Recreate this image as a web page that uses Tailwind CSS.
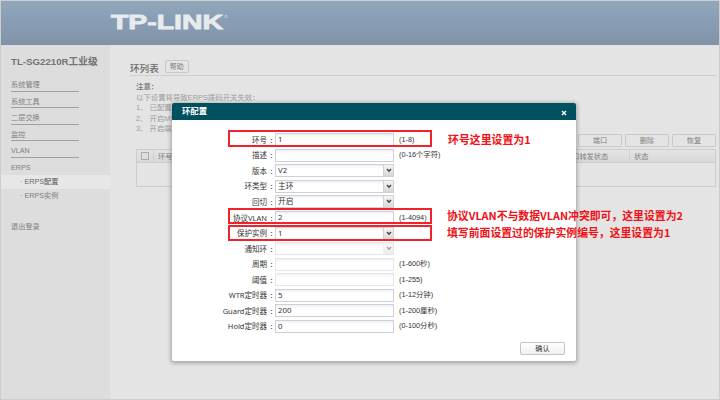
<!DOCTYPE html>
<html lang="zh-CN">
<head>
<meta charset="utf-8">
<title>环列表</title>
<script src="https://cdn.jsdelivr.net/npm/@tailwindcss/browser@4"></script>
</head>
<body class="relative h-[400px] w-[720px] overflow-hidden bg-[#e4e4e4] font-['Liberation_Sans','Noto_Sans_CJK_SC',sans-serif] text-[7.2px] text-[#808080]">
<div class="flex h-[400px] flex-col border border-[#cdcdcd] border-t-[#c3d1dc]">
  <header class="flex h-[44px] shrink-0 items-start border-b border-[#7f8fa5] bg-linear-to-b from-[#94a6b5] via-[#8ba2b9] via-25% to-[#8293a8] pt-[8px] pl-[109px]">
    <svg width="130" height="28" viewBox="0 0 130 28" fill="#e8ebed" stroke="#e8ebed">
      <text x="1" y="20" font-family="Liberation Sans" font-weight="700" font-size="20" textLength="112" lengthAdjust="spacingAndGlyphs" stroke-width=".8">TP-LINK</text>
      <circle cx="116" cy="7.5" r="1.2" fill="none" stroke-width=".5"/>
    </svg>
  </header>
  <div class="flex min-h-0 flex-1">
    <aside class="w-[109px] shrink-0 bg-[#dddddd]">
      <h1 class="mt-[9px] ml-[10px] h-[16px] text-[9.7px] leading-[16px] font-bold whitespace-nowrap text-[#747474]">TL-SG2210R工业级</h1>
      <nav class="mt-[5px] flex flex-col">
        <a class="ml-[10px] h-[16.6px] w-[68px] border-b border-[#a0a0a0] pt-[2px] leading-[15px]">系统管理</a>
        <a class="ml-[10px] h-[16.6px] w-[68px] border-b border-[#a0a0a0] pt-[2px] leading-[15px]">系统工具</a>
        <a class="ml-[10px] h-[16.6px] w-[68px] border-b border-[#a0a0a0] pt-[2px] leading-[15px]">二层交换</a>
        <a class="ml-[10px] h-[16.6px] w-[68px] border-b border-[#a0a0a0] pt-[2px] leading-[15px]">监控</a>
        <a class="ml-[10px] h-[16.6px] w-[68px] border-b border-[#a0a0a0] pt-[2px] leading-[15px]">VLAN</a>
        <a class="ml-[10px] h-[16.6px] pt-[2px] leading-[15px]">ERPS</a>
        <a class="h-[14px] bg-[#e7e7e7] pl-[19px] leading-[14px] font-medium text-[#686868]">· ERPS配置</a>
        <a class="h-[14px] pl-[19px] leading-[14px]">· ERPS实例</a>
        <a class="mt-[17px] ml-[10px] h-[14px] leading-[14px]">退出登录</a>
      </nav>
    </aside>
    <main class="min-w-0 flex-1 pt-[15px] pr-[3px] pl-[20px]">
      <div class="flex h-[16px] items-start border-b border-[#cfcfcf]">
        <h2 class="mt-px text-[9.6px] leading-[15px] font-medium text-[#6b6b6b]">环列表</h2>
        <button class="ml-[6px] h-[13px] w-[24px] rounded-[2px] border border-[#c8c8c8] text-[7px] leading-[11px]">帮助</button>
      </div>
      <div class="ml-[6px] h-[58px] pt-[5px] text-[7.4px] leading-[11px] whitespace-nowrap text-[#9c9c9c]">
        <p class="font-medium text-[#737373]">注意：</p>
        <p>以下设置将导致ERPS拨码开关失效：</p>
        <p class="leading-[10.6px]">1、 已配置环</p>
        <p class="leading-[10.6px]">2、 开启MSTP</p>
        <p class="leading-[10.6px]">3、 开启端口</p>
      </div>
      <div class="flex h-[15px] justify-end gap-[3px]">
        <button class="h-[13px] w-[44px] rounded-[1px] border border-[#c9c9c9] leading-[11px]">端口</button>
        <button class="h-[13px] w-[44px] rounded-[1px] border border-[#c9c9c9] leading-[11px]">删除</button>
        <button class="h-[13px] w-[44px] rounded-[1px] border border-[#c9c9c9] leading-[11px]">恢复</button>
      </div>
      <div class="ml-[6px] h-[38px] border border-[#cccccc]">
        <div class="flex h-[13px] items-center border-b border-[#d0d0d0] bg-linear-to-b from-[#e4e4e4] to-[#d8d8d8] leading-[13px]">
          <span class="ml-[4px] size-[8px] border border-[#aaaaaa]"></span>
          <span class="ml-[4px] h-full w-[412px] border-l border-[#cfcfcf] pl-[4px]">环号</span>
          <span class="h-full w-[64px]">端口转发状态</span>
          <span class="h-full border-l border-[#cfcfcf] pl-[4px]">状态</span>
        </div>
      </div>
    </main>
  </div>
</div>

<section class="absolute top-[103px] left-[172px] h-[258px] w-[404px] rounded-[2px] bg-white text-[#333333] shadow-[0_1px_4px_1px_rgba(0,0,0,0.3)]">
  <div class="flex h-[17px] items-center justify-between rounded-t-[2px] bg-[#005160] pr-[9px] pl-[10px] text-white">
    <span class="text-[8.4px] leading-[17px] font-bold">环配置</span>
    <svg width="6" height="6" viewBox="0 0 6 6" class="mt-[2px]" stroke="white" stroke-width="1.4"><path d="M1 1L5 5M5 1L1 5"/></svg>
  </div>
  <form id="rows" class="pt-[12px] font-['Noto_Sans','Noto_Sans_CJK_SC',sans-serif]"></form>
  <button class="absolute right-[11px] bottom-[6px] h-[13px] w-[45px] rounded-[2px] border border-[#c4c4c4] bg-linear-to-b from-white to-[#f0f0f0] text-[7.2px] leading-[11px]">确认</button>
  <div class="absolute top-[27px] left-[56px] h-[17px] w-[204px] border-2 border-[#f0222a]"></div>
  <div class="absolute top-[105px] left-[56px] h-[16px] w-[204px] border-2 border-[#f0222a]"></div>
  <div class="absolute top-[122px] left-[56px] h-[16px] w-[204px] border-2 border-[#f0222a]"></div>
  <div class="absolute top-[28px] left-[276px] text-[10.9px] leading-[16px] font-bold whitespace-nowrap text-[#f01015] font-['Noto_Sans_CJK_SC',sans-serif]">环号这里设置为1</div>
  <div class="absolute top-[104px] left-[275px] text-[10.85px] leading-[17px] font-bold whitespace-nowrap text-[#f01015] font-['Noto_Sans_CJK_SC',sans-serif]">
    <p>协议VLAN不与数据VLAN冲突即可，这里设置为2</p>
    <p>填写前面设置过的保护实例编号，这里设置为1</p>
  </div>
</section>
<script>
const rows = [
  ['环号', '1', '(1-8)'],
  ['描述', '', '(0-16个字符)'],
  ['版本', 'V2', '', 'select'],
  ['环类型', '主环', '', 'select'],
  ['回切', '开启', '', 'select'],
  ['协议VLAN', '2', '(1-4094)'],
  ['保护实例', '1', '', 'select'],
  ['通知环', '', '', 'select', true],
  ['周期', '', '(1-600秒)', '', true],
  ['阈值', '', '(1-255)', '', true],
  ['WTR定时器', '5', '(1-12分钟)'],
  ['Guard定时器', '200', '(1-200厘秒)'],
  ['Hold定时器', '0', '(0-100分秒)']
];
document.getElementById('rows').innerHTML = rows.map(([label, value, hint, kind, off]) => `
  <div class="flex h-[15.55px] items-center">
    <div class="flex w-[103px] justify-end gap-px text-[7.5px] leading-[14px] whitespace-nowrap"><span>${label}</span><span class="w-[7px] text-center">:</span></div>
    <div class="flex h-[13px] w-[119px] items-center justify-between border bg-linear-to-b from-[#f0f0f4] via-white via-30% to-white pl-[2px] text-[7.8px] leading-[11px] ${off ? 'border-[#e6e6e6]' : 'border-[#cfcfd8]'}">
      <span>${value}</span>
      ${kind ? `<span class="flex h-[11px] w-[10px] items-center justify-center border-l bg-linear-to-b from-[#f5f5f5] to-[#d8d8d8] ${off ? 'border-[#e6e6e6] opacity-50' : 'border-[#cfcfd8]'}"><svg width="6" height="5" viewBox="0 0 6 5" fill="none" stroke="#444" stroke-width="1.4"><path d="M1 1L3 3.2L5 1"/></svg></span>` : ''}
    </div>
    <span class="ml-[5px] text-[7.3px] leading-[14px] whitespace-nowrap font-['Liberation_Sans','Noto_Sans_CJK_SC',sans-serif]">${hint}</span>
  </div>`).join('');
</script>
</body>
</html>
